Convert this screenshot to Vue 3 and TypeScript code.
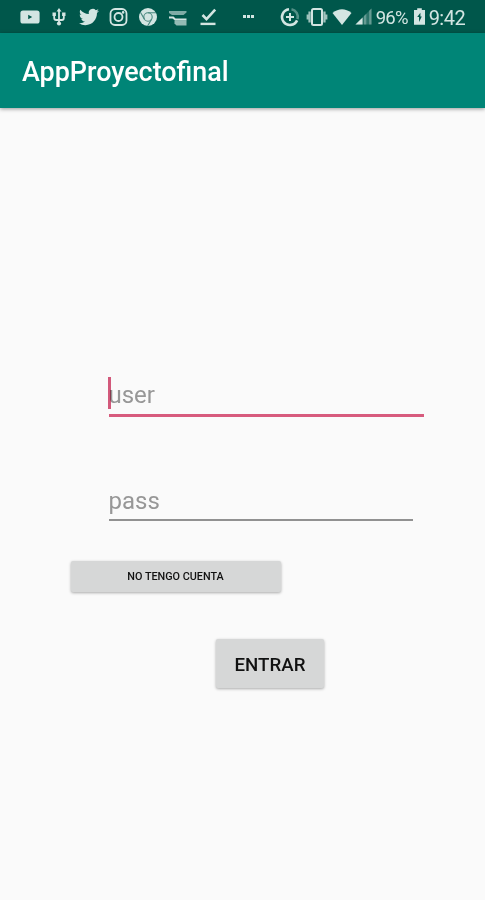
<script setup lang="ts">
import { ref } from 'vue'

const user = ref('')
const pass = ref('')
</script>

<template>
  <div class="screen">
    <div class="status">
      <div class="notifications">
        <svg viewBox="0 0 20 20"><path fill-rule="evenodd" d="M3 3.500h14q2.600 0 2.600 2.600v7.800q0 2.600-2.600 2.600H3q-2.600 0-2.600-2.600V6.100q0-2.600 2.600-2.600ZM8.200 7.800v4.400l4-2.200Z" /></svg>
        <svg viewBox="0 0 20 20"><path d="M10 1 7.500 4.500h5ZM3.500 5.500h3.400v3.400H3.500ZM13.100 5.500h3.400v3.400h-3.400Z" /><circle cx="10" cy="16.500" r="2.100" /><path class="line" d="M10 4v12M5.200 8v3q0 2 2 2h5.600q2 0 2-2V8" /></svg>
        <svg viewBox="0 0 24 24"><path d="M23.950 4.570a10 10 0 0 1-2.820.77 4.960 4.960 0 0 0 2.160-2.720 9.900 9.900 0 0 1-3.120 1.180 4.920 4.920 0 0 0-8.380 4.480C7.690 8.090 4.070 6.130 1.640 3.160a4.820 4.820 0 0 0-.67 2.480c0 1.710.87 3.210 2.190 4.100a4.900 4.900 0 0 1-2.230-.62v.06a4.920 4.920 0 0 0 3.950 4.830 5 5 0 0 1-2.210.08 4.940 4.940 0 0 0 4.600 3.420A9.870 9.870 0 0 1 0 19.540a14 14 0 0 0 7.550 2.210c9.050 0 14-7.500 14-13.980 0-.21 0-.42-.02-.63a9.900 9.900 0 0 0 2.420-2.570Z" /></svg>
        <svg viewBox="0 0 20 20"><rect class="line" x="1.500" y="2" width="16" height="16" rx="4.500" /><circle class="line" cx="9.500" cy="10" r="4" /><circle cx="14.100" cy="5.400" r="1.300" /></svg>
        <svg viewBox="0 0 20 20"><circle cx="10" cy="10" r="9" /><g class="cut"><circle cx="10" cy="10" r="4.200" /><path d="M10 5.800h8M6.400 12.100 2.400 5.300M13.600 12.100 9.600 19" /></g><circle cx="10" cy="10" r="2.300" opacity=".55" /></svg>
        <svg viewBox="0 0 20 20"><path opacity=".6" d="M1 4h17.500v1.500l-3 2.500H4L1 6Z" /><path d="M1 9.500h4.500l2 2h11v2H7L4.500 11.500H1Z" /><path opacity=".7" d="M6.500 13.500h12v5h-10l-2-2Z" /></svg>
        <svg viewBox="0 0 20 20"><path class="check" d="m4.500 8 4 4.200 8.700-9.500" /><path d="M2.500 15.700h15v2.400h-15Z" /></svg>
      </div>
      <div class="more"><i /><i /><i /></div>
      <div class="system">
        <svg class="saver" viewBox="0 0 20 20"><path class="saver-arc" d="M9 2.200a7.900 7.900 0 1 0 8.100 11.200" /><path class="saver-arc faint" d="M11.500 2.200a7.900 7.900 0 0 1 6 10" /><path class="plus" d="M10 6v8M6 10h8" /></svg>
        <svg class="vibrate" viewBox="0 0 22 20"><rect class="phone" x="6" y="2" width="10" height="16" rx="1.500" /><path opacity=".75" d="M2.400 4.500h2.300v11H2.400ZM.6 7.500h1.800v5H.6ZM17.300 4.500h2.300v11h-2.300ZM19.600 7.500h1.800v5h-1.800Z" /></svg>
        <svg class="wifi" viewBox="0 0 20 16"><path d="M10 16 .5 4Q10-3.500 19.500 4Z" /></svg>
        <svg class="signal" viewBox="0 0 18 18"><path opacity=".2" d="M17.500.5v17H.5Z" /><path d="M8 10v7.500H.5Z" /><path opacity=".35" d="M9.500 8.500v9H12V6ZM15 3v14.500h2.500V.5Z" /></svg>
        <span class="percent">96%</span>
        <svg class="battery" viewBox="0 0 12 18"><path fill-rule="evenodd" d="M3.500 0h5v2H12v16H0V2h3.500ZM7 5 3.500 9.500h2V15L8.500 9H7Z" /></svg>
        <span class="clock">9:42</span>
      </div>
    </div>
    <header class="appbar"><h1>AppProyectofinal</h1></header>
    <main>
      <label class="field focused"><input v-model="user" type="text" placeholder="user" /><span class="caret" /></label>
      <label class="field password"><input v-model="pass" type="password" placeholder="pass" /></label>
      <button class="register" type="button">NO TENGO CUENTA</button>
      <button class="enter" type="button">ENTRAR</button>
    </main>
  </div>
</template>

<style>
body { margin: 0; background: #fafafa; }
</style>

<style scoped>
.screen { height: 900px; display: flex; flex-direction: column; overflow: hidden; background: #fafafa; font-family: Roboto, sans-serif; }
.status { height: 33px; flex: none; display: flex; align-items: center; background: #00574b; color: #d3e5e2; box-sizing: border-box; }
svg { display: block; flex: none; fill: #d3e5e2; overflow: visible; }
.notifications { display: flex; gap: 9.700px; margin-left: 19.500px; }
.notifications svg { width: 20px; height: 20px; }
.line { fill: none; stroke: #d3e5e2; stroke-width: 1.800; }
.cut { fill: none; stroke: #4a8980; stroke-width: 1.100; }
.check { fill: none; stroke: #d3e5e2; stroke-width: 2.600; }
.more { display: flex; gap: 1px; margin-left: 25.500px; }
.more i { width: 3px; height: 3px; background: #d3e5e2; }
.system { display: flex; align-items: center; margin-left: 25.500px; }
.saver { width: 20px; height: 20px; }
.saver-arc { fill: none; stroke: #d3e5e2; stroke-width: 2.600; }
.faint { opacity: .4; }
.plus { fill: none; stroke: #d3e5e2; stroke-width: 2; }
.vibrate { width: 22px; height: 20px; margin-left: 6px; }
.phone { fill: none; stroke: #d3e5e2; stroke-width: 2; }
.wifi { width: 20px; height: 16px; margin-left: 4px; }
.signal { width: 17px; height: 17px; margin-left: 3px; }
.percent { width: 34px; margin-left: 4px; font-size: 18.500px; line-height: 22px; letter-spacing: -.7px; padding-top: 2px; }
.battery { width: 11px; height: 17px; margin-left: 4px; }
.clock { margin-left: 4px; font-size: 20px; line-height: 22px; letter-spacing: -.5px; padding-top: 2px; }
.appbar { height: 75px; flex: none; display: flex; align-items: center; padding: 3px 22px 0; box-sizing: border-box; background: #008577; box-shadow: 0 1px 4px rgba(0, 0, 0, .4); }
h1 { margin: 0; color: #fff; font-size: 26.900px; line-height: 34px; font-weight: 500; }
main { display: flex; flex-direction: column; align-items: flex-start; padding-top: 267px; }
.field { position: relative; display: block; width: 315px; height: 42px; margin-left: 108.500px; box-sizing: border-box; border-bottom: 3px solid #d75b7d; }
.field input { display: block; width: 100%; height: 39px; padding: 1px 0 0; box-sizing: border-box; border: 0; outline: 0; background: transparent; color: #222; font: 24px/37px Roboto, sans-serif; }
.field input::placeholder { color: #979797; opacity: 1; }
.caret { position: absolute; left: -.3px; top: 2px; width: 3px; height: 32px; background: #d75b7d; mix-blend-mode: multiply; }
.password { width: 304px; height: 39px; margin-top: 65px; border-bottom: 2px solid #919191; }
.password input { height: 37px; line-height: 35px; }
button { display: flex; align-items: center; justify-content: center; padding: 0; border: 0; border-radius: 2px; background: #d6d7d7; color: #111; font-family: Roboto, sans-serif; font-weight: 500; box-shadow: 0 1px 3px rgba(0, 0, 0, .32); }
.register { width: 210px; height: 31px; margin: 40px 0 0 70.500px; font-size: 10.800px; }
.enter { width: 108px; height: 49px; margin: 47px 0 0 216px; padding-top: 2px; box-sizing: border-box; font-size: 18.700px; }
</style>
